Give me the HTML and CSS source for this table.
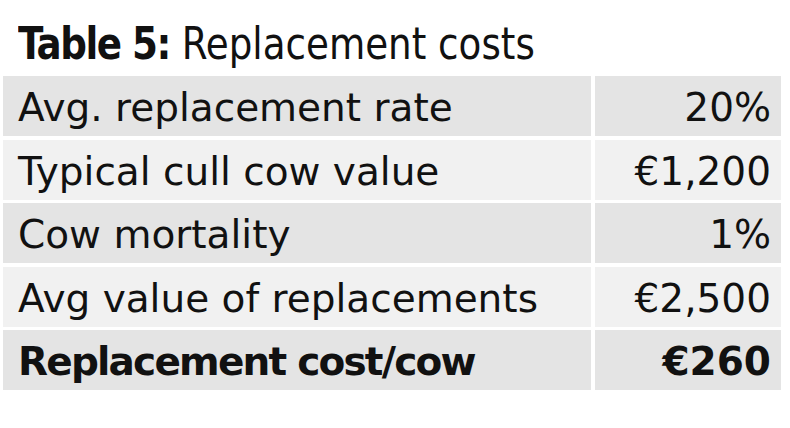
FILE: index.html
```html
<!DOCTYPE html>
<html lang="en">
<head>
    <meta charset="UTF-8">
    <title>Table 5: Replacement costs</title>
    <link rel="stylesheet" href="styles.css">
</head>
<body>
    <div class="table-box">
        <h2 class="caption"><span class="caption-text"><b>Table 5:</b> Replacement costs</span></h2>
        <div class="grid">
            <div class="cell dark">Avg. replacement rate</div>
            <div class="cell dark num">20%</div>
            <div class="cell light">Typical cull cow value</div>
            <div class="cell light num">€1,200</div>
            <div class="cell dark">Cow mortality</div>
            <div class="cell dark num">1%</div>
            <div class="cell light">Avg value of replacements</div>
            <div class="cell light num">€2,500</div>
            <div class="cell dark total">Replacement cost/cow</div>
            <div class="cell dark num total">€260</div>
        </div>
    </div>
</body>
</html>
```

FILE: styles.css
```css
body {
    margin: 0;
    background: #fff;
    color: #111;
    font-family: 'DejaVu Sans', sans-serif;
}

.table-box {
    padding: 0 9px 0 3px;
}

.caption {
    margin: 0;
    height: 76px;
    padding-left: 15px;
    box-sizing: border-box;
    padding-top: 18px;
    font-family: 'DejaVu Sans Condensed', 'DejaVu Sans', sans-serif;
    font-weight: normal;
    font-size: 45px;
    line-height: 52px;
    white-space: nowrap;
}

/* the printed caption uses a narrow face */
.caption-text {
    display: inline-block;
    transform: scaleX(0.92);
    transform-origin: left center;
}

.caption b {
    font-weight: bold;
    letter-spacing: -1.6px;
}

.grid {
    display: grid;
    grid-template-columns: 588px 186px;
    grid-auto-rows: 60px;
    gap: 3.5px 4px;
}

.cell {
    display: flex;
    align-items: center;
    padding: 3px 10px 0 15px;
    font-size: 39px;
}

.num { justify-content: flex-end; }
.dark { background: #e4e4e4; }
.light { background: #f1f1f1; }
.total { font-weight: bold; letter-spacing: -1.8px; }
.num.total { letter-spacing: 0; }
```
